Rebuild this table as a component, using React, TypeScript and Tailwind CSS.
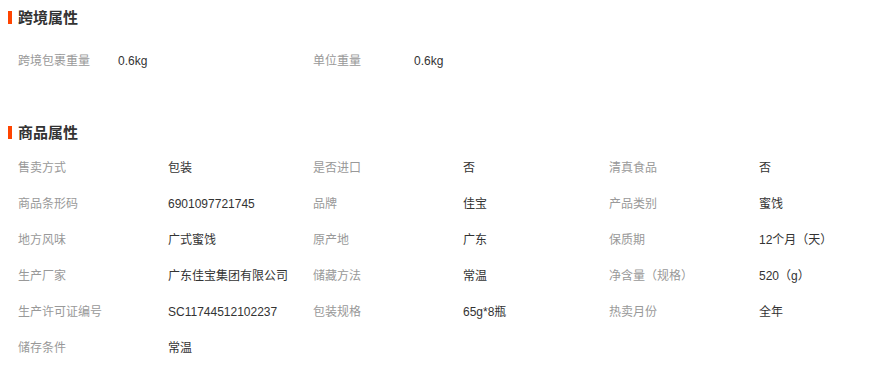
import React from "react";

const font = { fontFamily: '"Liberation Sans", "Noto Sans CJK SC", sans-serif' };

function Title({ text }: { text: string }) {
  return (
    <div className="flex h-[34px] items-center pl-[8px]">
      <span className="h-[13px] w-[4px] bg-[#ff4400]" />
      <span className="ml-[6px] text-[15px] font-bold leading-none text-[#333]">{text}</span>
    </div>
  );
}

const rows2: [string, string][][] = [
  [["售卖方式", "包装"], ["是否进口", "否"], ["清真食品", "否"]],
  [["商品条形码", "6901097721745"], ["品牌", "佳宝"], ["产品类别", "蜜饯"]],
  [["地方风味", "广式蜜饯"], ["原产地", "广东"], ["保质期", "12个月（天）"]],
  [["生产厂家", "广东佳宝集团有限公司"], ["储藏方法", "常温"], ["净含量（规格）", "520（g）"]],
  [["生产许可证编号", "SC11744512102237"], ["包装规格", "65g*8瓶"], ["热卖月份", "全年"]],
  [["储存条件", "常温"]],
];

export default function App() {
  return (
    <div className="h-[370px] w-[873px] bg-white text-[12px]" style={font}>
      <Title text="跨境属性" />
      <div className="mt-[8px] grid h-[36px] grid-cols-[295px_295px_1fr] items-center pl-[18px] pt-[2px]">
        <div className="flex">
          <span className="w-[100px] text-[#999]">跨境包裹重量</span>
          <span className="text-[#333]">0.6kg</span>
        </div>
        <div className="flex">
          <span className="w-[101px] text-[#999]">单位重量</span>
          <span className="text-[#333]">0.6kg</span>
        </div>
      </div>
      <div className="mt-[37px]">
        <Title text="商品属性" />
      </div>
      <div className="pl-[18px]">
        {rows2.map((r, i) => (
          <div key={i} className="grid h-[36px] grid-cols-[295px_296px_1fr] items-center pt-[2px]">
            {r.map(([k, v], j) => (
              <div key={j} className="flex">
                <span className="w-[150px] text-[#999]">{k}</span>
                <span className="text-[#333]">{v}</span>
              </div>
            ))}
          </div>
        ))}
      </div>
    </div>
  );
}
